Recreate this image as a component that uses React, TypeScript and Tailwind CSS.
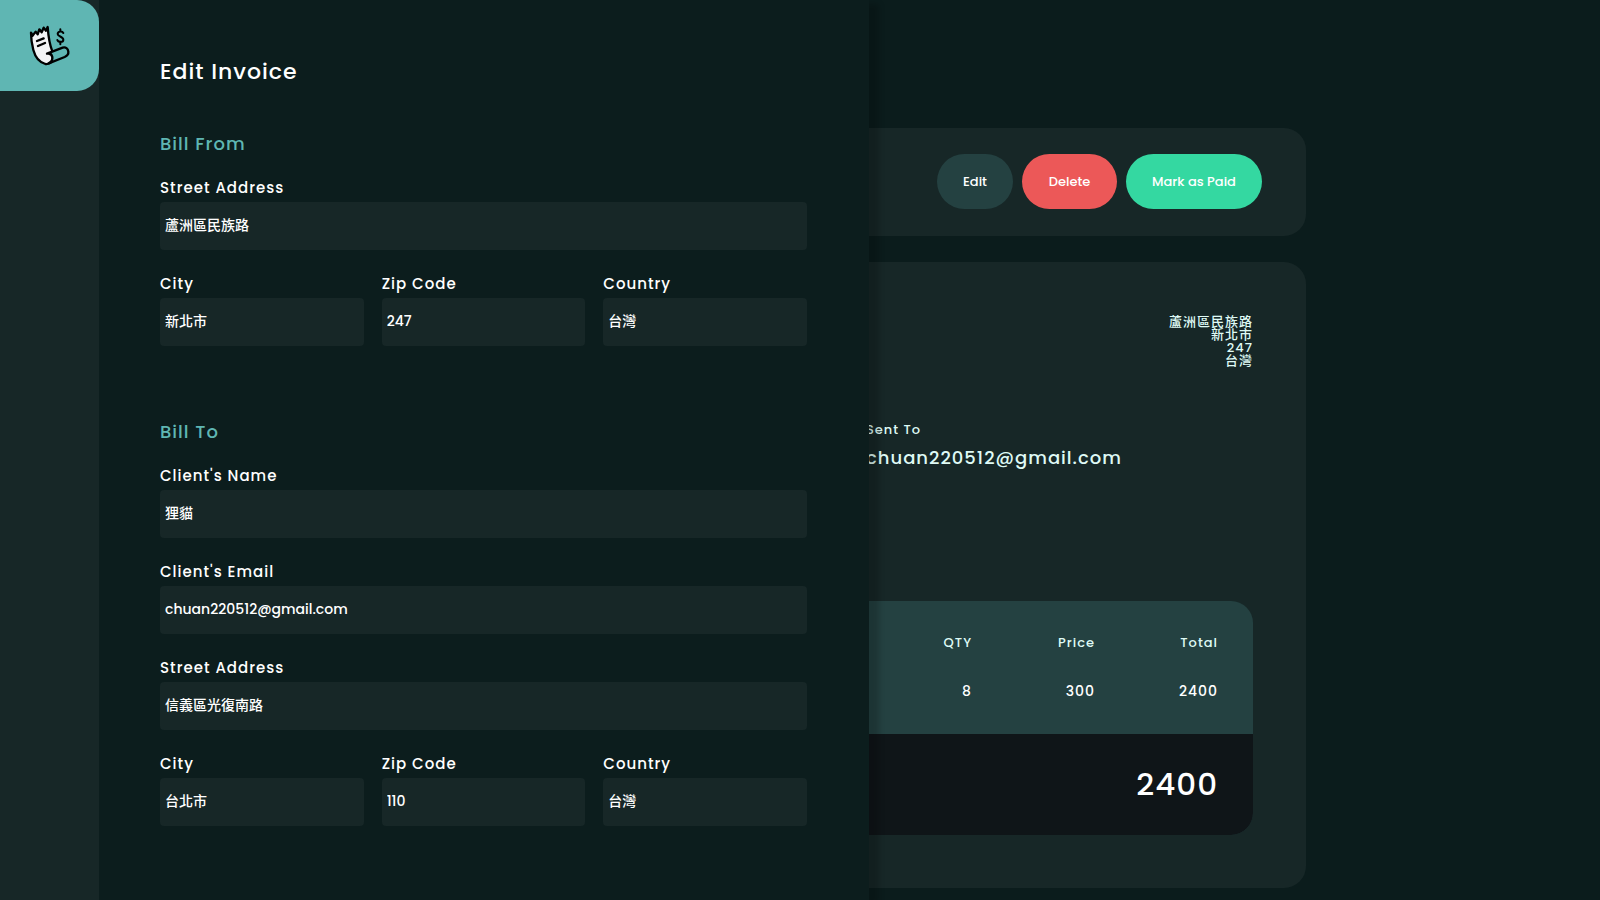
import { useId } from "react";

type FieldProps = { label: string; value: string; type?: string };

function Field({ label, value, type = "text" }: FieldProps) {
  const id = useId();
  return (
    <div className="flex min-w-0 flex-1 flex-col gap-0.5">
      <label htmlFor={id} className="text-[15px] leading-6 tracking-[1px]">
        {label}
      </label>
      <input
        id={id}
        type={type}
        defaultValue={value}
        className="h-12 w-full rounded bg-[#172727] px-[5px] pb-0.5 text-[14px] text-white outline-none"
      />
    </div>
  );
}

function Logo() {
  return (
    <svg viewBox="84 72 132 132" className="size-11" fill="none" stroke="#000" strokeWidth="7" strokeLinejoin="round" strokeLinecap="round" aria-hidden="true">
      <path
        fill="#f3f3f5"
        d="M93 98 L98 107 L107 95 L113 103 L118 88 L125 97 L131 83 L138 92 L143 81 C145 108 148 132 157 154 L158 180 C153 189 145 193 136 192 C118 187 106 172 100 150 C95 130 93 114 93 98 Z"
      />
      <path
        fill="#5fb6b3"
        d="M141 161 L188 143 C197 140 204 146 205 155 C206 163 201 168 194 171 L146 190 C155 185 158 178 157 171 C155 163 149 159 141 161 Z"
      />
      <path d="M111 123 L131 115 M114 138 L135 129" />
      <path strokeWidth="6" d="M190 99 C187 93 173 93 173 102 C173 110 190 109 190 119 C190 128 174 127 172 120 M181 88 L181 94 M181 127 L181 133" />
    </svg>
  );
}

function Drawer() {
  return (
    <form className="absolute inset-y-0 left-0 z-10 w-[869px] max-w-full overflow-hidden bg-[#0c1d1d] pt-14 pr-[62px] pl-40 shadow-[10px_4px_6px_rgba(0,0,0,0.2)]">
      <h1 className="text-[22px] leading-8 tracking-[1px]">Edit Invoice</h1>

      <fieldset className="mt-[42px] flex flex-col gap-[22px]">
        <legend className="mb-[18px] text-[18px] leading-7 tracking-[1px] text-[#5fb6b3]">Bill From</legend>
        <Field label="Street Address" value="蘆洲區民族路" />
        <div className="flex gap-[18px]">
          <Field label="City" value="新北市" />
          <Field label="Zip Code" value="247" />
          <Field label="Country" value="台灣" />
        </div>
      </fieldset>

      <fieldset className="mt-[72px] flex flex-col gap-[22px]">
        <legend className="mb-[18px] text-[18px] leading-7 tracking-[1px] text-[#5fb6b3]">Bill To</legend>
        <Field label="Client's Name" value="狸貓" />
        <Field label="Client's Email" value="chuan220512@gmail.com" type="email" />
        <Field label="Street Address" value="信義區光復南路" />
        <div className="flex gap-[18px]">
          <Field label="City" value="台北市" />
          <Field label="Zip Code" value="110" />
          <Field label="Country" value="台灣" />
        </div>
      </fieldset>
    </form>
  );
}

function Invoice() {
  return (
    <main className="mx-auto flex max-w-[1012px] flex-col gap-[26px] pt-32 pb-3">
      <header className="flex justify-end gap-[9px] rounded-[22px] bg-[#172727] pt-[26px] pr-11 pb-[27px] text-[13px]">
        <button type="button" className="h-[55px] min-w-[76px] rounded-[28px] bg-[#244141] px-6">Edit</button>
        <button type="button" className="h-[55px] min-w-[95px] rounded-[28px] bg-[#ec5858] px-6">Delete</button>
        <button type="button" className="h-[55px] min-w-[136px] rounded-[28px] bg-[#34d8a1] px-6">Mark as Paid</button>
      </header>

      <section className="rounded-[22px] bg-[#172727] p-[53px] text-[#dffaf5]">
        <address className="flex flex-col text-right text-[13px] leading-[13px] tracking-[1px] not-italic">
          <span>蘆洲區民族路</span>
          <span>新北市</span>
          <span>247</span>
          <span>台灣</span>
        </address>

        <div className="mt-[53px] ml-auto h-[181px] w-[387px] tracking-[1px]">
          <p className="text-[13px] leading-5">Sent To</p>
          <p className="mt-1 text-[18px] leading-7">chuan220512@gmail.com</p>
        </div>

        <div className="overflow-hidden rounded-[22px] bg-[#244141]">
          <table className="w-full table-fixed text-right tracking-[1px]">
            <colgroup>
              <col />
              <col className="w-[123px]" />
              <col className="w-[158px]" />
            </colgroup>
            <thead className="text-[13px]">
              <tr className="h-[66px] align-bottom">
                <th className="pb-[15px] font-medium">QTY</th>
                <th className="pb-[15px] font-medium">Price</th>
                <th className="pr-[35px] pb-[15px] font-medium">Total</th>
              </tr>
            </thead>
            <tbody className="text-[14px] text-white">
              <tr className="h-[67px] align-top">
                <td className="pt-3.5">8</td>
                <td className="pt-3.5">300</td>
                <td className="pt-3.5 pr-[35px]">2400</td>
              </tr>
            </tbody>
          </table>
          <p className="bg-[#0f1518] px-[35px] py-[26px] text-right text-[31px] leading-[49px] tracking-[1px] text-white">2400</p>
        </div>
      </section>
    </main>
  );
}

export default function App() {
  return (
    <div className="relative min-h-screen overflow-hidden bg-[#0b1c1c] font-['Poppins','Inter','Noto_Sans_CJK_TC',sans-serif] font-medium text-white">
      <Invoice />
      <Drawer />
      <aside className="absolute inset-y-0 left-0 z-20 w-[99px] bg-[#172727]">
        <a href="#" aria-label="Home" className="flex h-[91px] items-center justify-center rounded-r-[22px] bg-[#5fb6b3]">
          <Logo />
        </a>
      </aside>
    </div>
  );
}
